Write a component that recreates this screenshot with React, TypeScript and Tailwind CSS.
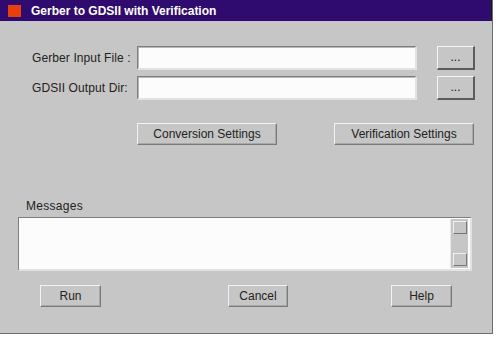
import React from "react";

const font = { fontFamily: '"Liberation Sans", Arial, Helvetica, sans-serif' };

function Field() {
  return (
    <div className="h-[24px] w-[280px] bg-[#fcfcfc] border-t border-l border-t-[#7e7e7e] border-l-[#7e7e7e] border-b-2 border-r-2 border-b-[#e2e2e2] border-r-[#e2e2e2] shadow-[inset_1px_1px_0_#b8b8b8]" />
  );
}

function DotsButton() {
  return (
    <div className="h-[24px] w-[38px] flex items-center justify-center bg-[#c6c6c6] border-t border-l border-t-[#f4f4f4] border-l-[#f4f4f4] border-b-2 border-r-2 border-b-[#5c5c5c] border-r-[#5c5c5c] text-[12px] text-[#202020] leading-none pb-[2px]">
      ...
    </div>
  );
}

function Button({ w, children }: { w: string; children: React.ReactNode }) {
  return (
    <div
      className={`${w} h-[22px] flex items-center justify-center bg-[#c6c6c6] border-t border-l border-t-[#f2f2f2] border-l-[#f2f2f2] border-b border-r border-b-[#7a7a7a] border-r-[#7a7a7a] shadow-[inset_-1px_-1px_0_#a8a8a8] text-[12px] text-[#222] leading-none`}
    >
      {children}
    </div>
  );
}

function ScrollBtn() {
  return (
    <div className="w-[14px] h-[13px] bg-[#c6c6c6] border-t border-l border-t-[#f0f0f0] border-l-[#f0f0f0] border-b border-r border-b-[#777] border-r-[#777]" />
  );
}

export default function App() {
  return (
    <div className="w-[496px] h-[337px] bg-white" style={font}>
      <div className="w-[493px] h-[334px] bg-[#c6c6c6] border-r border-b border-r-[#6e6e6e] border-b-[#6e6e6e] flex flex-col">
        {/* Title bar */}
        <div className="h-[21px] bg-[#300b6f] border-r border-r-[#1a1a1a] flex items-center pl-[8px]">
          <div className="w-[13px] h-[12px] bg-[#e8400c] mt-[1px]" />
          <div className="ml-[10px] text-white font-bold text-[12px] leading-none mt-[1px]">
            Gerber to GDSII with Verification
          </div>
        </div>

        {/* Rows */}
        <div className="mt-[25px] flex flex-col gap-[6px]">
          <div className="flex items-center h-[24px]">
            <div className="w-[137px] pl-[32px] text-[12px] text-[#222] tracking-[0.1px]">Gerber Input File :</div>
            <Field />
            <div className="ml-[20px]">
              <DotsButton />
            </div>
          </div>
          <div className="flex items-center h-[24px]">
            <div className="w-[137px] pl-[32px] text-[12px] text-[#222] tracking-[0.1px]">GDSII Output Dir:</div>
            <Field />
            <div className="ml-[20px]">
              <DotsButton />
            </div>
          </div>
        </div>

        {/* Settings buttons */}
        <div className="mt-[23px] flex pl-[137px] gap-[57px]">
          <Button w="w-[140px]">Conversion Settings</Button>
          <Button w="w-[140px]">Verification Settings</Button>
        </div>

        {/* Messages */}
        <div className="mt-[54px] pl-[26px] text-[12px] text-[#222] leading-[14px] tracking-[0.3px]">Messages</div>
        <div className="mt-[4px] ml-[18px] w-[454px] h-[54px] flex bg-[#fcfcfc] border-t border-l border-t-[#7e7e7e] border-l-[#7e7e7e] border-b-2 border-r-2 border-b-[#e2e2e2] border-r-[#e2e2e2]">
          <div className="flex-1" />
          <div className="w-[18px] my-[1px] mr-[2px] bg-[#c6c6c6] border-l border-l-[#e8e8e8] flex flex-col items-center justify-between py-[2px]">
            <ScrollBtn />
            <ScrollBtn />
          </div>
        </div>

        {/* Bottom buttons */}
        <div className="mt-[14px] flex">
          <div className="ml-[40px]">
            <Button w="w-[61px]">Run</Button>
          </div>
          <div className="ml-[127px]">
            <Button w="w-[60px]">Cancel</Button>
          </div>
          <div className="ml-[103px]">
            <Button w="w-[61px]">Help</Button>
          </div>
        </div>
      </div>
    </div>
  );
}
